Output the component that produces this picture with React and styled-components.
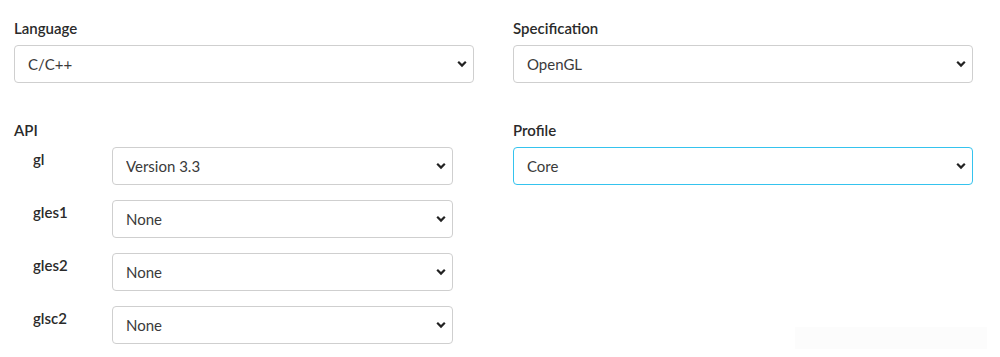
import React from 'react';
import styled, { createGlobalStyle } from 'styled-components';

const GlobalStyle = createGlobalStyle`
  html, body {
    margin: 0;
    padding: 0;
    background: #fff;
  }
  body {
    font-family: Lato, 'Open Sans', sans-serif;
    color: #222;
  }
`;

const Page = styled.div`
  display: grid;
  grid-template-columns: 460px 460px;
  align-content: start;
  align-items: start;
  column-gap: 39px;
  row-gap: 37px;
  padding: 18px 0 0 14px;
  width: 1000px;
  height: 357px;
  box-sizing: border-box;
`;

const Field = styled.div`
  display: flex;
  flex-direction: column;
`;

const Label = styled.label`
  font-size: 15px;
  font-weight: 600;
  line-height: 20px;
  color: #2a2a2a;
  margin-bottom: 7px;
`;

const SubGrid = styled.div`
  display: grid;
  grid-template-columns: 79px 341px;
  row-gap: 15px;
  padding-left: 19px;
`;

const SubLabel = styled.label`
  font-size: 15px;
  font-weight: 600;
  color: #2a2a2a;
  line-height: 20px;
  padding-top: 2px;
`;

const SelectWrap = styled.div`
  position: relative;
  width: ${(p) => p.$width || '100%'};
  height: 38px;
`;

const NativeSelect = styled.select`
  appearance: none;
  width: 100%;
  height: 38px;
  box-sizing: border-box;
  border: 1px solid ${(p) => (p.$focused ? '#35c3ee' : '#cfcfcf')};
  border-radius: 4px;
  background: #fff;
  padding: 0 30px 0 13px;
  font-family: Lato, 'Open Sans', sans-serif;
  font-size: 15px;
  color: #3a3a3a;
  outline: none;
`;

const Chevron = styled.svg`
  position: absolute;
  right: 7px;
  top: 15px;
  width: 10px;
  height: 8px;
  pointer-events: none;
`;

const Toast = styled.div`
  position: fixed;
  left: 795px;
  top: 327px;
  width: 192px;
  height: 22px;
  background: #fcfcfc;
`;

function Select({ value, options, focused, width }) {
  return (
    <SelectWrap $width={width}>
      <NativeSelect $focused={focused} defaultValue={value}>
        {options.map((o) => (
          <option key={o}>{o}</option>
        ))}
      </NativeSelect>
      <Chevron viewBox="0 0 10 8">
        <path d="M1.2 1.8 L5 5.6 L8.8 1.8" fill="none" stroke="#222" strokeWidth="2.2" />
      </Chevron>
    </SelectWrap>
  );
}

const apis = [
  { name: 'gl', value: 'Version 3.3' },
  { name: 'gles1', value: 'None' },
  { name: 'gles2', value: 'None' },
  { name: 'glsc2', value: 'None' },
];

export default function App() {
  return (
    <>
      <GlobalStyle />
      <Page>
        <Field>
          <Label>Language</Label>
          <Select value="C/C++" options={['C/C++', 'D', 'Nim', 'Pascal', 'Volt']} />
        </Field>
        <Field>
          <Label>Specification</Label>
          <Select value="OpenGL" options={['OpenGL', 'EGL', 'GLX', 'WGL']} />
        </Field>
        <Field>
          <Label>API</Label>
          <SubGrid>
            {apis.map((a) => (
              <React.Fragment key={a.name}>
                <SubLabel>{a.name}</SubLabel>
                <Select
                  value={a.value}
                  options={['None', 'Version 1.0', 'Version 2.0', 'Version 3.3', 'Version 4.6']}
                />
              </React.Fragment>
            ))}
          </SubGrid>
        </Field>
        <Field>
          <Label>Profile</Label>
          <Select value="Core" options={['Core', 'Compatibility']} focused />
        </Field>
      </Page>
      <Toast />
    </>
  );
}
